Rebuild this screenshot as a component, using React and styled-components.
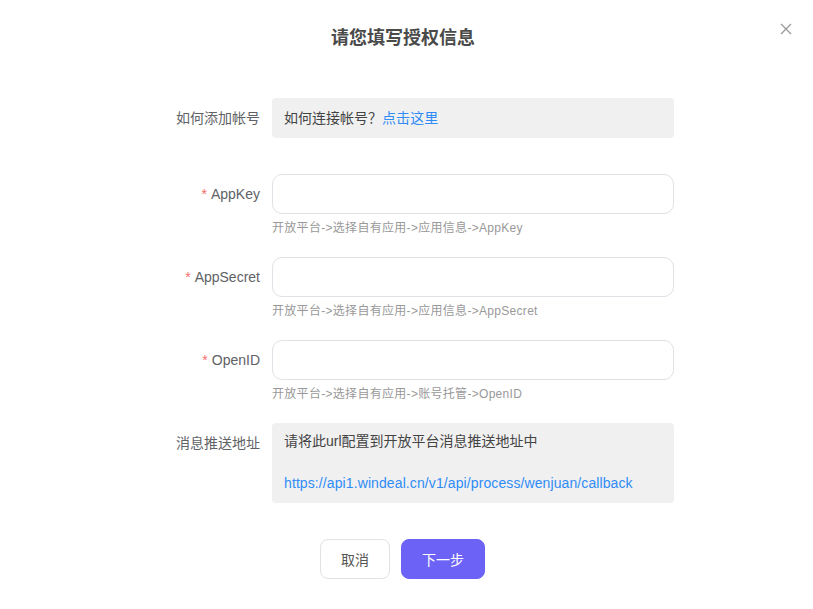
import React from 'react';
import styled, { createGlobalStyle } from 'styled-components';

const GlobalStyle = createGlobalStyle`
  html, body {
    margin: 0;
    padding: 0;
    background: #fff;
    font-family: "Liberation Sans", "Noto Sans CJK SC", sans-serif;
  }
`;

const Modal = styled.div`
  position: relative;
  width: 813px;
  height: 609px;
  background: #fff;
  padding-top: 26px;
  box-sizing: border-box;
`;

const Title = styled.h2`
  margin: 0 0 48px;
  padding-right: 7px;
  text-align: center;
  font-size: 18px;
  line-height: 24px;
  font-weight: 700;
  color: #4a4a4a;
`;

const Close = styled.button`
  position: absolute;
  top: 22px;
  right: 20px;
  width: 14px;
  height: 14px;
  padding: 0;
  border: 0;
  background: none;
  cursor: pointer;
`;

const Form = styled.div`
  display: flex;
  flex-direction: column;
  padding-left: 160px;
`;

const Row = styled.div`
  display: flex;
  align-items: flex-start;
  margin-bottom: ${(p) => p.gap || 0}px;
`;

const Label = styled.div`
  width: 100px;
  padding-right: 12px;
  text-align: right;
  font-size: 14px;
  line-height: 40px;
  color: #606266;
  flex-shrink: 0;
`;

const Star = styled.span`
  color: #f56c6c;
  margin-right: 4px;
`;

const Field = styled.div`
  width: 402px;
`;

const InfoBox = styled.div`
  background: #f0f0f0;
  border-radius: 4px;
  padding: ${(p) => (p.tall ? '8px 12px 9px' : '0 12px')};
  font-size: 14px;
  line-height: ${(p) => (p.tall ? '21px' : '40px')};
  color: #444;
`;

const Link = styled.a`
  color: #2f8cf6;
  text-decoration: none;
  letter-spacing: 0.1px;
`;

const Input = styled.input`
  display: block;
  width: 100%;
  height: 40px;
  box-sizing: border-box;
  border: 1px solid #dfe1e6;
  border-radius: 10px;
  padding: 0 12px;
  font-size: 14px;
  outline: none;
  background: #fff;
`;

const Hint = styled.div`
  padding-top: 6px;
  font-size: 12px;
  line-height: 16px;
  letter-spacing: 0.3px;
  color: #999;
`;

const Footer = styled.div`
  display: flex;
  justify-content: center;
  gap: 11px;
  margin-top: 36px;
  padding-right: 8px;
`;

const Button = styled.button`
  height: 40px;
  padding: 0 20px;
  border-radius: 8px;
  font-family: inherit;
  font-size: 14px;
  cursor: pointer;
  border: 1px solid ${(p) => (p.primary ? '#6c63f6' : '#e2e2e2')};
  background: ${(p) => (p.primary ? '#6c63f6' : '#fff')};
  color: ${(p) => (p.primary ? '#fff' : '#555')};
`;

const fields = [
  { name: 'AppKey', hint: '开放平台->选择自有应用->应用信息->AppKey' },
  { name: 'AppSecret', hint: '开放平台->选择自有应用->应用信息->AppSecret' },
  { name: 'OpenID', hint: '开放平台->选择自有应用->账号托管->OpenID' },
];

function App() {
  return (
    <>
      <GlobalStyle />
      <Modal>
        <Title>请您填写授权信息</Title>
        <Close aria-label="关闭">
          <svg width="14" height="14" viewBox="0 0 14 14">
            <path d="M2 2L12 12M12 2L2 12" stroke="#9a9a9a" strokeWidth="1.3" fill="none" />
          </svg>
        </Close>
        <Form>
          <Row gap={36}>
            <Label>如何添加帐号</Label>
            <Field>
              <InfoBox>
                如何连接帐号？<Link href="#">点击这里</Link>
              </InfoBox>
            </Field>
          </Row>
          {fields.map((f) => (
            <Row gap={21} key={f.name}>
              <Label>
                <Star>*</Star>
                {f.name}
              </Label>
              <Field>
                <Input />
                <Hint>{f.hint}</Hint>
              </Field>
            </Row>
          ))}
          <Row>
            <Label>消息推送地址</Label>
            <Field>
              <InfoBox tall>
                请将此url配置到开放平台消息推送地址中
                <br />
                <br />
                <Link href="#">https://api1.windeal.cn/v1/api/process/wenjuan/callback</Link>
              </InfoBox>
            </Field>
          </Row>
        </Form>
        <Footer>
          <Button>取消</Button>
          <Button primary>下一步</Button>
        </Footer>
      </Modal>
    </>
  );
}

export default App;
